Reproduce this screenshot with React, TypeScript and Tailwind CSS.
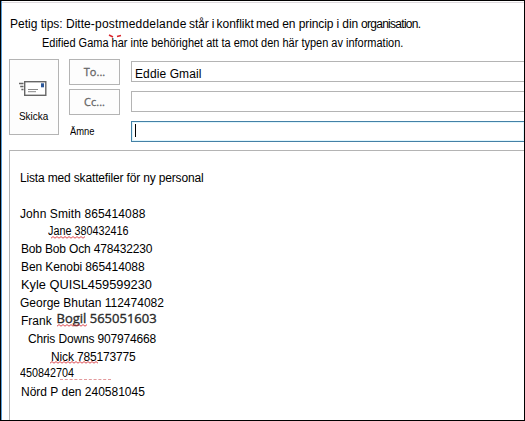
import type { ReactNode } from "react";

function Squiggle({ className, width }: { className: string; width: number }) {
  const steps = Math.floor(width / 2);
  const points = Array.from({ length: steps + 1 }, (_, i) => `${i * 2},${i % 2 ? 0.6 : 2.2}`).join(" ");
  return (
    <svg className={`absolute ${className}`} width={width} height="3" fill="none">
      <polyline points={points} stroke="#d8373d" strokeWidth="0.9" />
    </svg>
  );
}

function Row({ className, children }: { className: string; children: ReactNode }) {
  return <div className={`relative flex ${className}`}>{children}</div>;
}

function SendIcon() {
  return (
    <svg className="-ml-[2px]" width="28" height="16" viewBox="0 0 28 16" fill="none">
      <path d="M0 2.5h4.5M1.2 5.5h3.3M2.4 8.5h2.1" stroke="#666" strokeWidth="1.3" />
      <rect x="5.7" y="0.7" width="21.1" height="13.6" fill="#fff" stroke="#666" strokeWidth="1.4" />
      <rect x="22" y="2.3" width="3" height="4" fill="#2b579a" />
      <path d="M9 8.5h10M9 10.7h8" stroke="#888" strokeWidth="1" />
    </svg>
  );
}

export default function App() {
  return (
    <div className="h-[421px] w-[525px] overflow-hidden border border-black bg-white font-['Liberation_Sans',Arial,sans-serif] text-[12px] leading-[18px] whitespace-nowrap text-black">
      <div className="flex h-full flex-col border-l border-[#5a9fd8] pl-[7px]">
        <div className="-ml-[7px] h-[2px] shrink-0 border-b border-[#dedade]" />
        <div className="mt-[12px] flex h-[19px] shrink-0 pl-[1px]">
          <span className="w-[74px]">Petig tips: Ditt</span>
          <span className="w-[105px] tracking-[0.2px]">e-postmeddelande</span>
          <span className="w-[27.5px] tracking-[-0.1px]">står i</span>
          <span className="w-[39.5px]">konflikt</span>
          <span className="w-[105px] tracking-[-0.1px]">med en princip i din</span>
          <span className="tracking-[-0.72px]">organisation.</span>
        </div>
        <div className="relative h-[18px] shrink-0 pl-[33px]">
          <svg className="absolute top-0 left-[99px]" width="18" height="5" fill="none">
            <path d="M1 1l4 2M9 2.5l4-1" stroke="#d9252d" strokeWidth="1.4" />
          </svg>
          <div className="w-max origin-left scale-x-[0.915]">
            Edified Gama har inte behörighet att ta emot den här typen av information.
          </div>
        </div>
        <div className="mt-[7px] flex h-[91px] shrink-0">
          <button className="flex h-[76px] w-[50px] shrink-0 flex-col items-center border border-[#b4b4b4] bg-[#fdfdfd] pt-[21px]">
            <SendIcon />
            <span className="mt-[10px] block h-[18px] scale-x-[0.94] text-[10.6px] leading-[18px]">Skicka</span>
          </button>
          <div className="ml-[10px] flex w-[51px] shrink-0 flex-col gap-[4px] font-['Open_Sans',sans-serif] text-[11px] text-[#666]">
            <button className="h-[26px] border border-[#b4b4b4] bg-[#fdfdfd] leading-[24px] [-webkit-text-stroke:0.3px_#666]">To...</button>
            <button className="h-[26px] border border-[#b4b4b4] bg-[#fdfdfd] leading-[24px] [-webkit-text-stroke:0.3px_#666]">Cc...</button>
            <span className="mt-[4px] ml-[1px] w-max origin-left scale-x-[0.92] font-['Liberation_Sans',sans-serif] text-[10.2px] leading-[18px] text-black">
              Ämne
            </span>
          </div>
          <div className="mt-[2px] ml-[11px] flex grow flex-col gap-[9px]">
            <div className="h-[21px] border border-r-0 border-[#b4b4b4] pl-[3px] leading-[25px] tracking-[0.1px]">Eddie Gmail</div>
            <div className="h-[21px] border border-r-0 border-[#b4b4b4]" />
            <div className="h-[21px] border border-r-0 border-[#4481a6] pt-[2px] pl-[3px] shadow-[inset_0_0_0_1px_#e0f6fd]">
              <div className="h-[13px] w-px bg-black" />
            </div>
          </div>
        </div>
        <div className="grow border-t border-l border-[#b4b4b4] pt-[18px] pl-[10px]">
          <Row className="h-[36px] tracking-[-0.16px]">Lista med skattefiler för ny personal</Row>
          <Row className="h-[17px] tracking-[0.1px]">John Smith 865414088</Row>
          <Row className="h-[18px] pl-[28px]">
            <span className="w-max origin-left scale-x-[0.9]">Jane 380432416</span>
            <Squiggle className="top-[14px] left-[31px]" width={35} />
          </Row>
          <Row className="h-[18px] pl-[1px] tracking-[-0.17px]">Bob Bob Och 478432230</Row>
          <Row className="h-[18px] pl-[1px] tracking-[-0.1px]">Ben Kenobi 865414088</Row>
          <Row className="h-[18px] pl-[1px] text-[12.8px]">Kyle QUISL459599230</Row>
          <Row className="h-[18px]">George Bhutan 112474082</Row>
          <Row className="h-[18px] pl-[1px]">
            <span className="w-[35.5px]">Frank</span>
            <span className="-mt-[3px] font-['Open_Sans',sans-serif] text-[13px] text-[#2b2b2b] [-webkit-text-stroke:0.35px_#2b2b2b]">
              Bogil 565051603
            </span>
            <Squiggle className="top-[12px] left-[37px]" width={31} />
          </Row>
          <Row className="h-[18px] pl-[8px] tracking-[-0.16px]">Chris Downs 907974668</Row>
          <Row className="h-[16px] pl-[31px] tracking-[-0.15px]">
            Nick 785173775
            <Squiggle className="top-[13px] left-[30px]" width={48} />
          </Row>
          <Row className="h-[19px]">
            <span className="w-max origin-left scale-x-[0.9]">450842704</span>
            <div className="absolute top-[15px] left-[40px] w-[51px] border-t border-dashed border-[#e39a9d]" />
          </Row>
          <Row className="h-[18px] pl-[1px]">Nörd P den 240581045</Row>
        </div>
      </div>
    </div>
  );
}
